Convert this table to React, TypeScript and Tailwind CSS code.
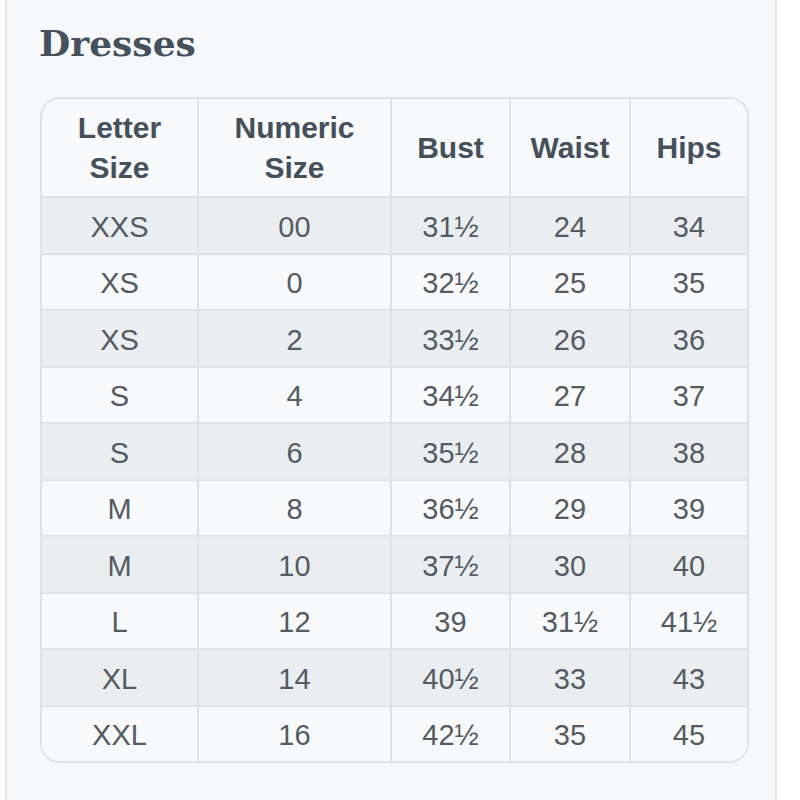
import React from "react";

const rows: string[][] = [
  ["XXS", "00", "31½", "24", "34"],
  ["XS", "0", "32½", "25", "35"],
  ["XS", "2", "33½", "26", "36"],
  ["S", "4", "34½", "27", "37"],
  ["S", "6", "35½", "28", "38"],
  ["M", "8", "36½", "29", "39"],
  ["M", "10", "37½", "30", "40"],
  ["L", "12", "39", "31½", "41½"],
  ["XL", "14", "40½", "33", "43"],
  ["XXL", "16", "42½", "35", "45"],
];

const headers = [
  ["Letter", "Size"],
  ["Numeric", "Size"],
  ["Bust"],
  ["Waist"],
  ["Hips"],
];

export default function App() {
  return (
    <div className="w-[800px] h-[800px] bg-white overflow-hidden">
      <div className="ml-[5px] w-[772px] h-full bg-[#f6f8fa] border-x-2 border-[#e3e5e7] pl-[33px]">
        <h1
          className="pt-[22px] text-[36px] leading-[42px] font-bold text-[#45515d] ml-[-1px]"
          style={{ fontFamily: '"DejaVu Serif", serif' }}
        >
          Dresses
        </h1>
        <div
          className="mt-[33px] w-[709px] border-2 border-[#dfe2e4] rounded-[20px] overflow-hidden grid grid-cols-[155px_193px_119px_120px_118px]"
          style={{ fontFamily: '"Liberation Sans", Arial, sans-serif' }}
        >
          {headers.map((h, i) => (
            <div
              key={i}
              className={`h-[97px] flex flex-col items-center justify-center text-[30px] leading-[40px] font-bold text-[#45505b] bg-[#f7f9fa] ${
                i > 0 ? "border-l-2 border-[#dfe2e4]" : ""
              }`}
            >
              {h.map((t) => (
                <span key={t}>{t}</span>
              ))}
            </div>
          ))}
          {rows.map((r, ri) =>
            r.map((c, ci) => (
              <div
                key={`${ri}-${ci}`}
                className={`h-[56.5px] pt-[4px] flex items-center justify-center text-[29px] text-[#545b62] border-t-2 border-[#dfe2e4] ${
                  ci > 0 ? "border-l-2" : ""
                } ${ri % 2 === 0 ? "bg-[#eaeef0]" : "bg-[#f7f9fa]"}`}
              >
                {c}
              </div>
            ))
          )}
        </div>
      </div>
    </div>
  );
}
